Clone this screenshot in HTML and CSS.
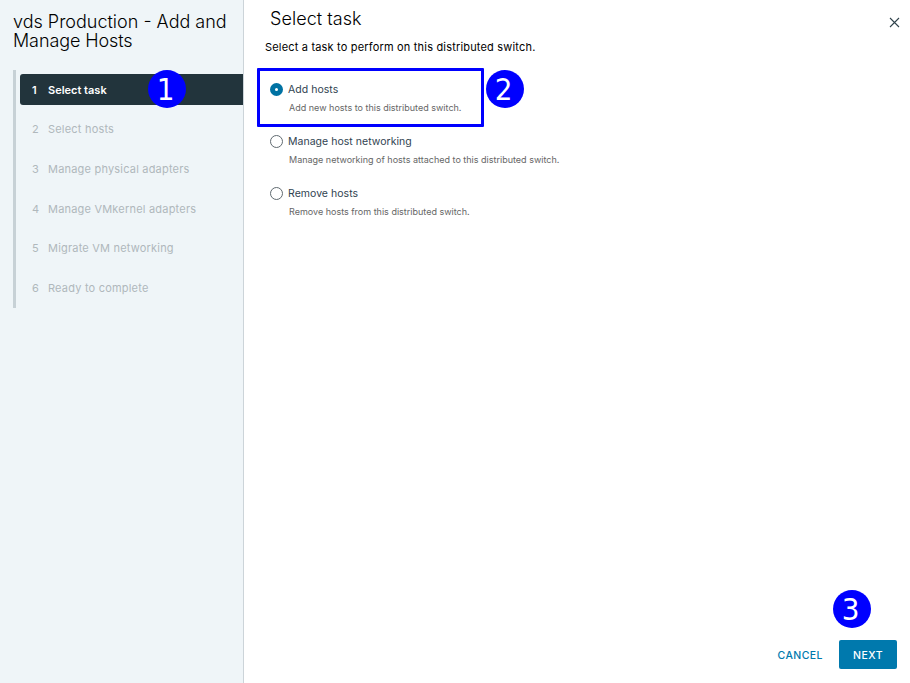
FILE: index.html
```html
<!DOCTYPE html>
<html lang="en">
<head>
<meta charset="utf-8">
<title>vds Production - Add and Manage Hosts</title>
<link rel="stylesheet" href="styles.css">
</head>
<body>
<div class="wizard">
  <aside class="sidebar">
    <h1 class="wizard-title">vds Production - Add and<br><span class="title-end">Manage Hosts</span></h1>
    <ol class="steps">
      <li class="step active"><span class="num">1</span><span>Select task</span><span class="badge badge-1">1</span></li>
      <li class="step"><span class="num">2</span><span>Select hosts</span></li>
      <li class="step"><span class="num">3</span><span>Manage physical adapters</span></li>
      <li class="step"><span class="num">4</span><span>Manage VMkernel adapters</span></li>
      <li class="step"><span class="num">5</span><span>Migrate VM networking</span></li>
      <li class="step"><span class="num">6</span><span>Ready to complete</span></li>
    </ol>
  </aside>
  <main class="content">
    <header class="header">
      <h2 class="page-title">Select task</h2>
      <svg class="close" viewBox="0 0 11 11" width="11" height="11"><path d="M1 1l9 9M10 1l-9 9"/></svg>
    </header>
    <p class="intro">Select a task to perform on this distributed switch.</p>
    <div class="options">
      <div class="option highlighted">
        <div class="option-row"><span class="radio checked"></span><span class="label">Add hosts</span></div>
        <p class="hint">Add new hosts to this distributed switch.</p>
        <span class="badge badge-2">2</span>
      </div>
      <div class="option">
        <div class="option-row"><span class="radio"></span><span class="label">Manage host networking</span></div>
        <p class="hint">Manage networking of hosts attached to this distributed switch.</p>
      </div>
      <div class="option">
        <div class="option-row"><span class="radio"></span><span class="label">Remove hosts</span></div>
        <p class="hint">Remove hosts from this distributed switch.</p>
      </div>
    </div>
    <footer class="footer">
      <button class="btn cancel">CANCEL</button>
      <button class="btn next">NEXT<span class="badge badge-3">3</span></button>
    </footer>
  </main>
</div>
</body>
</html>
```
FILE: styles.css
```css
* { box-sizing: border-box; }
body { margin: 0; background: #fff; color: #111; font-family: Inter, "Liberation Sans", sans-serif; }
h1, h2, p, ol { margin: 0; padding: 0; font-weight: 400; }
.wizard { display: flex; width: 910px; height: 683px; overflow: hidden; }
.sidebar { width: 244px; flex: none; background: #eff5f8; border-right: 1px solid #ccd4d9; padding: 12px 0 0 13px; }
.wizard-title { font-size: 18px; line-height: 19px; font-weight: 300; white-space: nowrap; color: #000; }
.title-end { letter-spacing: -0.1px; }
.steps { list-style: none; margin-top: 20px; height: 238px; border-left: 3px solid #c7d1d6; padding: 4px 0 0 4px; }
.step { position: relative; display: flex; align-items: center; height: 31px; margin-bottom: 8.7px; padding-left: 12px; font-size: 11px; letter-spacing: 0.2px; color: #b0b8bc; white-space: nowrap; }
.step .num { width: 16px; }
.step.active { background: #22343c; color: #fff; font-weight: 600; letter-spacing: 0; border-radius: 3px 0 0 3px; }
.badge { position: absolute; width: 38px; height: 38px; border-radius: 50%; background: #00f; color: #fff; font: 400 31px/38px "DejaVu Sans Condensed", "DejaVu Sans", sans-serif; font-stretch: condensed; letter-spacing: 0; text-align: center; padding-right: 3px; }
.badge-1 { left: 128px; top: -4px; }
.content { flex: 1; display: flex; flex-direction: column; }
.header { display: flex; justify-content: space-between; padding: 8px 10px 0 26px; height: 38px; }
.page-title { font-size: 18px; line-height: 22px; font-weight: 300; color: #000; letter-spacing: 0.05px; }
.close { margin-top: 9px; fill: none; stroke: #30424b; stroke-width: 1.1; }
.intro { padding-left: 21px; font-size: 11px; line-height: 18px; letter-spacing: 0.18px; color: #000; white-space: nowrap; }
.options { margin: 12px 0 0 13px; }
.option { position: relative; width: 227px; height: 52px; padding-left: 13px; white-space: nowrap; }
.option.highlighted { height: 59px; margin-bottom: 6px; border: 3px solid #00f; border-radius: 1px; padding: 10px 0 0 10px; }
.option-row { display: flex; align-items: center; height: 16px; gap: 5px; }
.radio { width: 13px; height: 13px; border: 1px solid #606a70; border-radius: 50%; background: #fff; }
.radio.checked { border: 5px solid #0072a3; }
.label { font-size: 10.5px; letter-spacing: 0.03px; color: #314351; }
.hint { margin: 4px 0 0 19px; font-size: 9px; line-height: 13px; color: #666; }
.badge-2 { left: 226px; top: -1px; }
.footer { margin-top: auto; display: flex; justify-content: flex-end; align-items: center; padding: 0 13px 14px 0; gap: 16px; }
.btn { position: relative; height: 29px; border: 0; padding: 2px 0 0; background: none; font: 500 10.5px/27px Inter, sans-serif; letter-spacing: 0.45px; color: #0079ad; }
.next { width: 58px; background: #0079ad; color: #fff; border-radius: 2px; }
.badge-3 { left: -6px; top: -50px; }
```
